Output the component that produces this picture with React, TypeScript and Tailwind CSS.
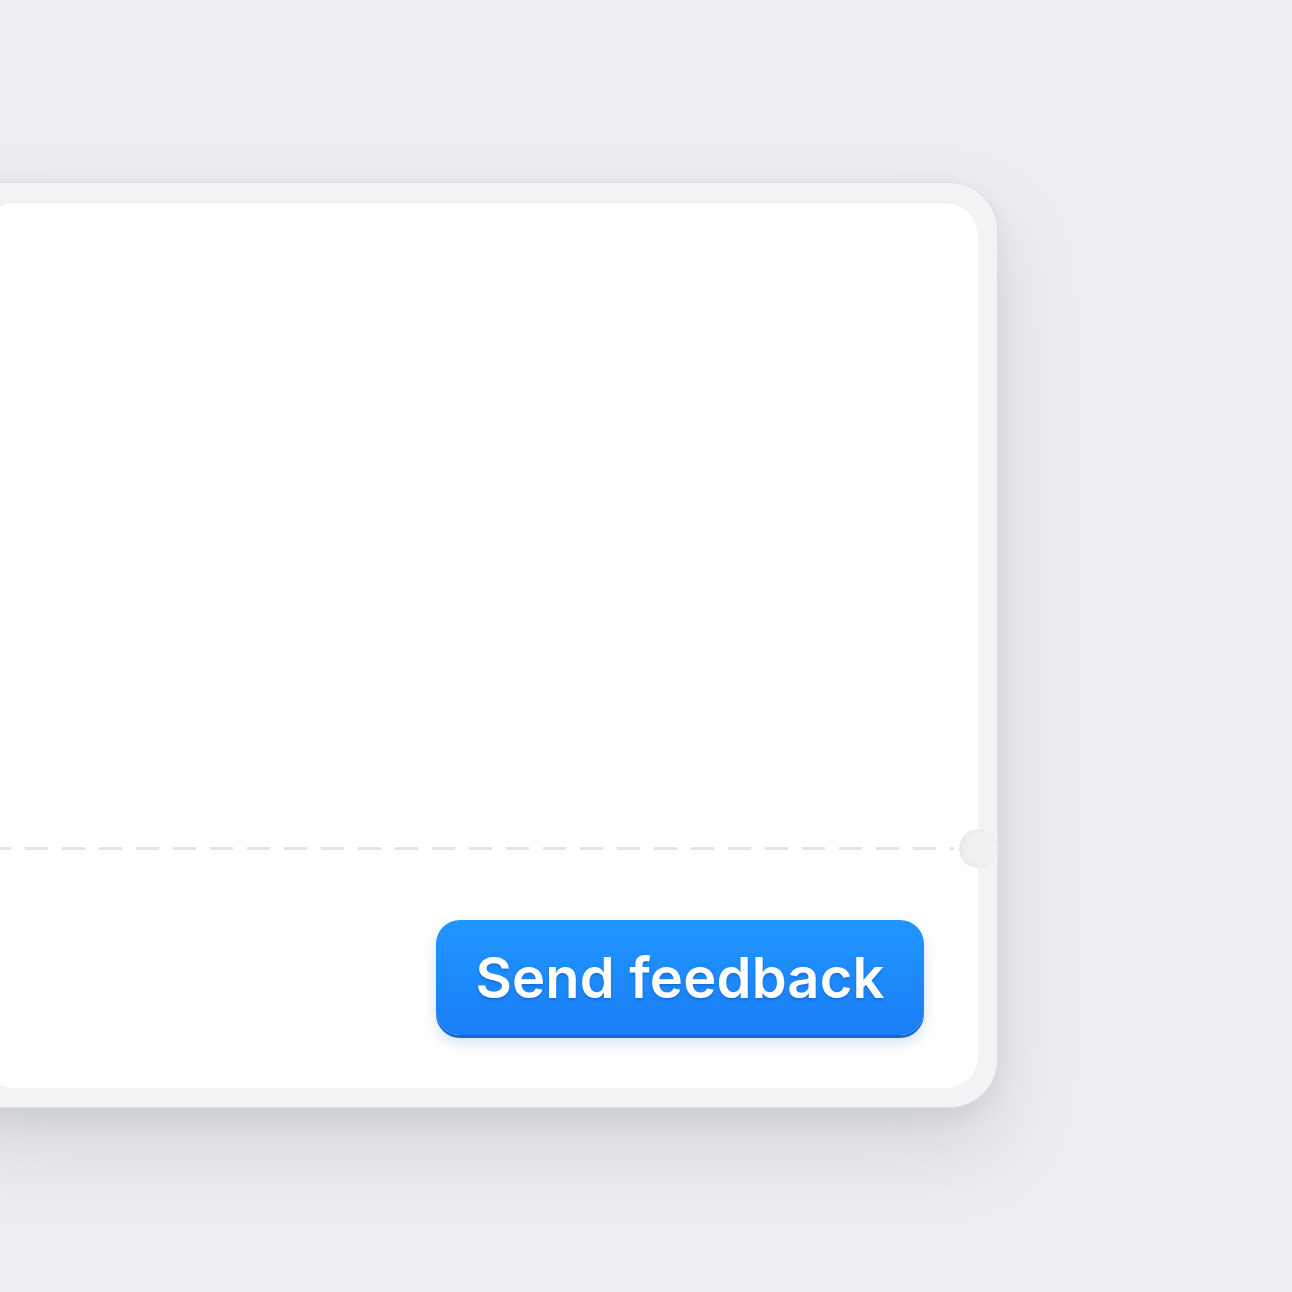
import React from "react"

const App = (): JSX.Element => {
  return (
    <div className="w-[1292px] h-[1292px] overflow-hidden bg-[#edeef1] pt-[182px]" style={{ fontFamily: "Inter, 'Liberation Sans', sans-serif" }}>
      {/* Card frame, runs off the left edge */}
      <div className="-ml-[60px] w-[1058px] h-[926px] rounded-[48px] border border-[#dedfe3] bg-[#f2f3f5] p-[19px] pl-[40px] shadow-[0_40px_80px_rgba(120,124,140,0.22),0_8px_20px_rgba(120,124,140,0.12)]">
        <div className="relative h-full rounded-[32px] bg-white flex flex-col shadow-[inset_0_1px_0_#e9eaee]">
          {/* Content area */}
          <div className="h-[645px]" />

          {/* Dashed divider */}
          <div className="relative h-[3px] mr-[24px] bg-[repeating-linear-gradient(90deg,#e3e4e7_0px,#e3e4e7_23px,transparent_23px,transparent_37px)] bg-[position:7px_0]" />

          {/* Notch */}
          <div className="absolute right-[-20px] top-[627px] w-[39px] h-[39px] rounded-full bg-[#eff0f2] shadow-[inset_3px_0_5px_rgba(0,0,0,0.04)]" />

          {/* Footer */}
          <div className="flex flex-1 items-end justify-end pr-[54px] pb-[53px]">
            <button className="w-[488px] h-[115px] rounded-[24px] bg-gradient-to-b from-[#2196ff] to-[#1a7ef6] text-white text-[56px] font-semibold tracking-[0.2px] shadow-[0_3px_0_#1669cf,0_8px_14px_rgba(30,100,200,0.18)] [text-shadow:0_2px_3px_rgba(0,40,120,0.25)]">
              Send feedback
            </button>
          </div>
        </div>
      </div>
    </div>
  )
}

export default App
